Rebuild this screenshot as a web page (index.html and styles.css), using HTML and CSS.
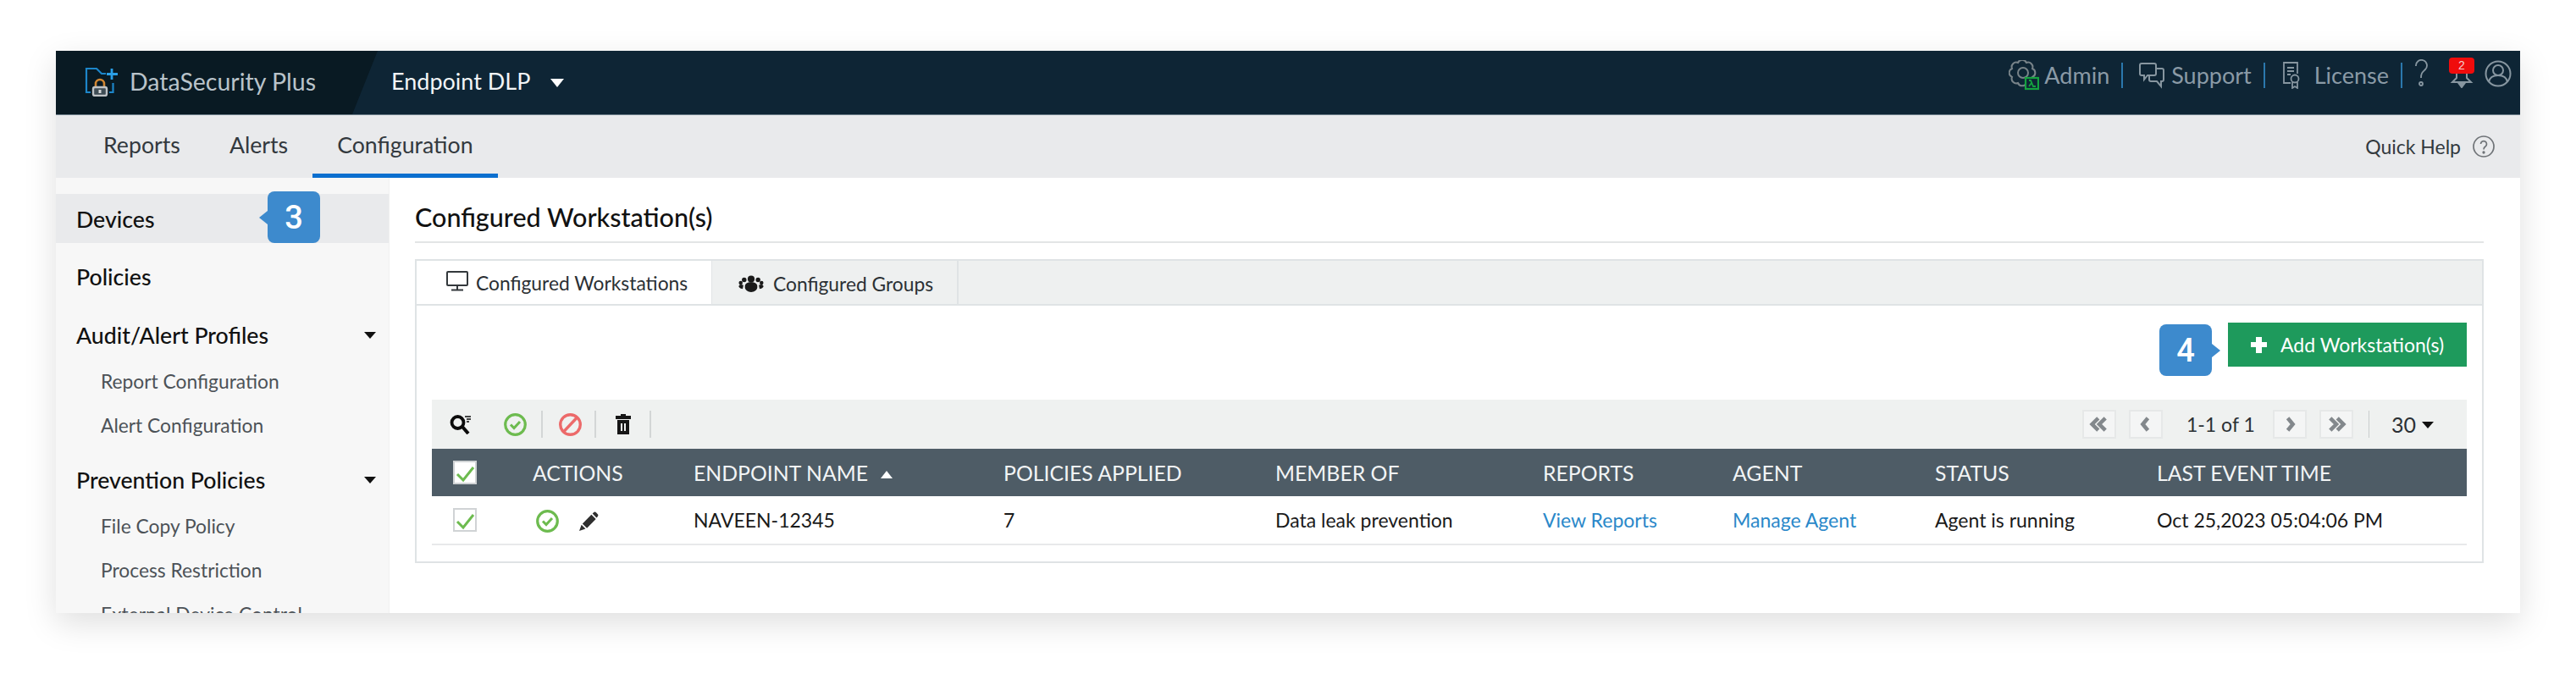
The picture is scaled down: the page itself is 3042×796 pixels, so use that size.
FILE: index.html
```html
<!DOCTYPE html>
<html lang="en">
<head>
<meta charset="utf-8">
<title>DataSecurity Plus - Endpoint DLP</title>
<link rel="stylesheet" href="styles.css">
</head>
<body>
<div class="window">
  <header class="topbar">
    <div class="brand">
      <svg class="brand-icon" viewBox="0 0 40 36" fill="none">
        <path d="M8 31H3V3h12l6 6h5" stroke="#1d86c9" stroke-width="2.200"/>
        <path d="M33 3v13M27 9.500h13" stroke="#2a9fe6" stroke-width="2.800"/>
        <path d="M34.500 20v11H30" stroke="#1d86c9" stroke-width="2.200"/>
        <path d="M14 25v-4a5 5 0 0 1 10 0v4" stroke="#d08632" stroke-width="2.600"/>
        <rect x="11" y="25" width="16" height="10" rx="2" fill="#3f4d55" stroke="#bfc3c6" stroke-width="2.400"/>
        <rect x="17.500" y="28" width="3" height="4" fill="#d5d8da"/>
      </svg>
      <span class="brand-name">DataSecurity Plus</span>
    </div>
    <div class="product">Endpoint DLP<span class="caret-white"></span></div>
    <nav class="top-links">
      <svg class="ic-admin" viewBox="0 0 36 36" fill="none">
        <path d="M21 3A5.400 5.400 0 0 1 28 10A5.400 5.400 0 0 1 28 20A5.400 5.400 0 0 1 21 27A5.400 5.400 0 0 1 11 27A5.400 5.400 0 0 1 4 20A5.400 5.400 0 0 1 4 10A5.400 5.400 0 0 1 11 3A5.400 5.400 0 0 1 21 3Z" stroke="#788389" stroke-width="2"/>
        <circle cx="17" cy="15" r="6" stroke="#788389" stroke-width="2"/>
        <rect x="20" y="21" width="15" height="13" fill="#0e2535" stroke="#14a23f" stroke-width="2.200"/>
        <path d="M24 24h2l3 7h3M27 27l-3 4" stroke="#14a23f" stroke-width="1.800"/>
      </svg>
      <span class="top-text">Admin</span><i class="top-sep"></i>
      <svg class="ic-support" viewBox="0 0 30 32" fill="none" stroke="#8796a0" stroke-width="2">
        <path d="M3 2h15a2 2 0 0 1 2 2v10a2 2 0 0 1-2 2H10l-4 5v-5H3a2 2 0 0 1-2-2V4a2 2 0 0 1 2-2z"/>
        <path d="M20 8h7a2 2 0 0 1 2 2v11a2 2 0 0 1-2 2h-1v6l-5-6h-7a2 2 0 0 1-2-2v-5"/>
      </svg>
      <span class="top-text">Support</span><i class="top-sep"></i>
      <svg class="ic-license" viewBox="0 0 20 32" fill="none" stroke="#8796a0" stroke-width="1.800">
        <path d="M9 25H1V1h16v13"/>
        <path d="M5 7h8M5 11h8M5 15h4"/>
        <circle cx="14" cy="20" r="4.500"/>
        <path d="M11 24v7l3-2 3 2v-7"/>
      </svg>
      <span class="top-text">License</span><i class="top-sep"></i>
      <svg class="ic-question" viewBox="0 0 15 32" fill="none" stroke="#8796a0" stroke-width="1.800">
        <path d="M1 8a6.500 6.500 0 1 1 11 4c-3 3-5 4-5 10"/>
        <circle cx="7" cy="29" r="2"/>
      </svg>
      <span class="bell">
        <svg class="ic-bell" viewBox="0 0 28 30" fill="none" stroke="#8796a0" stroke-width="2">
          <path d="M8 6v12l-5 5h22l-5-5V6"/>
          <path d="M11 25h6l-3 4z" fill="#8796a0"/>
        </svg>
        <span class="badge">2</span>
      </span>
      <svg class="ic-user" viewBox="0 0 32 32" fill="none" stroke="#8796a0" stroke-width="2">
        <circle cx="16" cy="16" r="14.500"/>
        <circle cx="16" cy="12" r="6"/>
        <path d="M5 26c1-6 5-8 11-8s10 2 11 8"/>
      </svg>
    </nav>
  </header>

  <div class="subnav">
    <a class="subnav-item">Reports</a>
    <a class="subnav-item">Alerts</a>
    <a class="subnav-item is-active">Configuration</a>
    <div class="quick-help">Quick Help
      <svg class="ic-help" viewBox="0 0 26 26" fill="none" stroke="#6f7377" stroke-width="1.700">
        <circle cx="13" cy="13" r="12"/>
        <path d="M9.500 10a3.500 3.500 0 1 1 5.500 3c-1.500 1-2 1.500-2 3.500"/>
        <circle cx="13" cy="20" r=".8"/>
      </svg>
    </div>
  </div>

  <div class="body">
    <aside class="sidebar">
      <div class="side-item is-current">Devices
        <span class="callout callout-left">3</span>
      </div>
      <div class="side-item gap-a">Policies</div>
      <div class="side-item gap-b">Audit/Alert Profiles<span class="caret-dark"></span></div>
      <div class="side-sub">Report Configuration</div>
      <div class="side-sub">Alert Configuration</div>
      <div class="side-item gap-c">Prevention Policies<span class="caret-dark"></span></div>
      <div class="side-sub">File Copy Policy</div>
      <div class="side-sub">Process Restriction</div>
      <div class="side-sub">External Device Control</div>
    </aside>

    <main class="main">
      <h1 class="title">Configured Workstation(s)</h1>
      <section class="panel">
        <div class="tabs">
          <div class="tab tab-on">
            <svg class="ic-monitor" viewBox="0 0 26 24" fill="none" stroke="#33383c" stroke-width="2">
              <rect x="1" y="1" width="24" height="16" rx="1"/>
              <path d="M13 17v5M6 22.500h14"/>
            </svg>
            Configured Workstations
          </div>
          <div class="tab tab-off">
            <svg class="ic-group" viewBox="0 0 34 22" fill="#1a1a1a">
              <circle cx="17" cy="5" r="4.500"/><circle cx="8" cy="6" r="3"/><circle cx="26" cy="6" r="3"/>
              <circle cx="3.500" cy="10" r="2.500"/><circle cx="30.500" cy="10" r="2.500"/>
              <path d="M9 14c0-3 3-5 8-5s8 2 8 5v2c0 3-4 6-8 6s-8-3-8-6z"/>
              <path d="M1 15c0-2 1-3 3-3l3 1-1 5-3-1zM33 15c0-2-1-3-3-3l-3 1 1 5 3-1z"/>
            </svg>
            Configured Groups
          </div>
        </div>
        <div class="panel-body">
          <div class="action-row">
            <span class="callout callout-right">4</span>
            <button class="add-btn"><span class="plus"></span>Add Workstation(s)</button>
          </div>
          <div class="toolbar">
            <svg class="ic-search" viewBox="0 0 26 24" fill="none" stroke="#0b0b0b">
              <circle cx="9.500" cy="10" r="7" stroke-width="3.800"/>
              <path d="M15 15l7 8" stroke-width="4"/>
              <path d="M18 3h7M20 6h5M20 9h3" stroke-width="1.500"/>
            </svg>
            <svg class="ic-ok tool-a" viewBox="0 0 27 27" fill="none" stroke="#6dbb4f">
              <circle cx="13.500" cy="13.500" r="11.800" stroke-width="3.200"/>
              <path d="M8 13.500l4 4 7-7.500" stroke-width="3"/>
            </svg>
            <i class="tool-sep sep-a"></i>
            <svg class="ic-ok tool-b" viewBox="0 0 27 27" fill="none" stroke="#ec6a6a" stroke-width="3.400">
              <circle cx="13.500" cy="13.500" r="11.800"/>
              <path d="M6 21.500L21 5.500"/>
            </svg>
            <i class="tool-sep sep-b"></i>
            <svg class="ic-trash tool-c" viewBox="0 0 20 24" fill="#161616">
              <path d="M7 0h6v2h6v4H1V2h6z"/>
              <path fill-rule="evenodd" d="M3 7h14v17H3zM7 11v9h2v-9zM11 11v9h2v-9z"/>
            </svg>
            <i class="tool-sep sep-c"></i>
            <div class="pager">
              <button class="page-btn"><svg viewBox="0 0 20 16" fill="none" stroke="#83888c" stroke-width="3.800"><path d="M9 2L3 8l6 6M16 2l-6 6 6 6"/></svg></button>
              <button class="page-btn"><svg viewBox="0 0 20 16" fill="none" stroke="#83888c" stroke-width="3.800"><path d="M12 2L7 8l5 6"/></svg></button>
              <span class="page-text">1-1 of 1</span>
              <button class="page-btn"><svg viewBox="0 0 20 16" fill="none" stroke="#83888c" stroke-width="3.800"><path d="M8 2l5 6-5 6"/></svg></button>
              <button class="page-btn"><svg viewBox="0 0 20 16" fill="none" stroke="#83888c" stroke-width="3.800"><path d="M4 2l6 6-6 6M11 2l6 6-6 6"/></svg></button>
              <i class="page-sep"></i>
              <span class="page-size">30<span class="caret-dark caret-inline"></span></span>
            </div>
          </div>
          <table class="grid">
            <colgroup>
              <col class="c1"><col class="c2"><col class="c3"><col class="c4"><col class="c5"><col class="c6"><col class="c7"><col class="c8"><col class="c9">
            </colgroup>
            <thead>
              <tr>
                <th><span class="check"><svg viewBox="0 0 24 24" fill="none" stroke="#6dbb4f" stroke-width="3"><path d="M3 14l7 7L22 6"/></svg></span></th>
                <th>ACTIONS</th>
                <th>ENDPOINT NAME<span class="caret-up"></span></th>
                <th>POLICIES APPLIED</th>
                <th>MEMBER OF</th>
                <th>REPORTS</th>
                <th>AGENT</th>
                <th>STATUS</th>
                <th>LAST EVENT TIME</th>
              </tr>
            </thead>
            <tbody>
              <tr>
                <td><span class="check"><svg viewBox="0 0 24 24" fill="none" stroke="#6dbb4f" stroke-width="3"><path d="M3 14l7 7L22 6"/></svg></span></td>
                <td class="row-actions">
                  <svg class="ic-row-ok" viewBox="0 0 27 27" fill="none" stroke="#6dbb4f">
                    <circle cx="13.500" cy="13.500" r="11.800" stroke-width="3.200"/>
                    <path d="M8 13.500l4 4 7-7.500" stroke-width="3"/>
                  </svg>
                  <svg class="ic-pencil" viewBox="0 0 24 24" fill="#2f2f2f">
                    <path d="M4 15L15 4l5.500 5.500L9.500 20.500z"/>
                    <path d="M2.800 16.500l5 5L0 24z"/>
                    <path d="M16.300 2.700l1.200-1.200a2.500 2.500 0 0 1 3.500 0l1.500 1.500a2.500 2.500 0 0 1 0 3.500l-1.200 1.200z"/>
                  </svg>
                </td>
                <td>NAVEEN-12345</td>
                <td>7</td>
                <td>Data leak prevention</td>
                <td><a class="link">View Reports</a></td>
                <td><a class="link">Manage Agent</a></td>
                <td>Agent is running</td>
                <td>Oct 25,2023 05:04:06 PM</td>
              </tr>
            </tbody>
          </table>
        </div>
      </section>
    </main>
  </div>
</div>
</body>
</html>
```
FILE: styles.css
```css
* { box-sizing: border-box; }
html, body { margin: 0; height: 100%; background: #fff; }
body {
  padding: 60px 66px 0;
  font-family: Lato, "Open Sans", sans-serif;
  color: #1a1a1a;
  overflow: hidden;
}
svg { display: block; flex: none; }

.window {
  width: 2910px;
  height: 664px;
  display: flex;
  flex-direction: column;
  background: #fff;
  overflow: hidden;
  box-shadow: 0 12px 36px rgba(0, 0, 0, .13);
}

/* top bar */
.topbar {
  height: 76px;
  flex: none;
  display: flex;
  align-items: center;
  background: #0e2535;
  border-bottom: 1px solid #6d7f8a;
}
.brand {
  width: 380px;
  height: 100%;
  flex: none;
  display: flex;
  align-items: center;
  padding: 0 0 4px 33px;
  background: #091a23;
  clip-path: polygon(0 0, 100% 0, 350px 100%, 0 100%);
}
.brand-icon { width: 40px; height: 36px; }
.brand-name { margin-left: 14px; font-size: 28.500px; color: #b9c3ca; }
.product {
  margin-left: 16px;
  padding-bottom: 4px;
  font-size: 27px;
  color: #f2f5f7;
  display: flex;
  align-items: center;
}
.caret-white {
  margin: 4px 0 0 24px;
  border-left: 8px solid transparent;
  border-right: 8px solid transparent;
  border-top: 10px solid #fff;
}
.top-links {
  margin-left: auto;
  padding: 0 10px 18px 0;
  display: flex;
  align-items: center;
  color: #8796a0;
}
.top-text { font-size: 27px; color: #8a9aa6; }
.top-sep { width: 2px; height: 30px; margin: 0 16px 0 14px; background: #2b78ad; }
.ic-admin { width: 36px; height: 36px; margin-right: 6px; }
.ic-support { width: 30px; height: 32px; margin: 0 8px 0 3px; }
.ic-license { width: 20px; height: 32px; margin: 0 17px 0 5px; }
.ic-question { width: 15px; height: 32px; margin: -6px 25px 0 -1px; }
.bell { position: relative; display: block; width: 30px; height: 30px; margin-right: 12px; }
.ic-bell { width: 28px; height: 30px; margin: 0 1px; }
.badge {
  position: absolute;
  left: 0;
  top: -6px;
  width: 30px;
  height: 19px;
  border-radius: 4px;
  background: #f00c0c;
  color: #f4cfcf;
  font: 14px/19px "Liberation Sans", sans-serif;
  text-align: center;
}
.ic-user { width: 32px; height: 32px; margin-top: -4px; }

/* sub navigation */
.subnav {
  height: 74px;
  flex: none;
  display: flex;
  background: #e9eaec;
  padding-left: 27px;
}
.subnav-item {
  display: flex;
  align-items: center;
  padding: 0 29px;
  height: 74px;
  font-size: 26.700px;
  color: #33393e;
  border-bottom: 5px solid transparent;
}
.is-active { border-bottom-color: #0b6fcf; }
.quick-help {
  margin-left: auto;
  padding-right: 30px;
  display: flex;
  align-items: center;
  gap: 14px;
  font-size: 23px;
  color: #33393e;
}
.ic-help { width: 26px; height: 26px; }

/* body */
.body { flex: 1; min-height: 0; display: flex; }
.sidebar {
  width: 394px;
  flex: none;
  padding-top: 19px;
  background: #f7f7f7;
  border-right: 1px solid #f0f0f0;
}
.side-item {
  position: relative;
  height: 58px;
  padding: 2px 15px 0 24px;
  display: flex;
  align-items: center;
  justify-content: space-between;
  font-size: 26.700px;
  font-weight: 500;
  color: #111;
}
.is-current { background: #e9eaec; }
.gap-a { margin-top: 10px; }
.gap-b { margin-top: 11px; }
.gap-c { margin-top: 9px; }
.side-sub {
  height: 52px;
  padding-left: 53px;
  display: flex;
  align-items: center;
  font-size: 22.800px;
  color: #4c5257;
}
.caret-dark {
  border-left: 7px solid transparent;
  border-right: 7px solid transparent;
  border-top: 8px solid #111;
}
.callout {
  position: absolute;
  width: 62px;
  height: 61px;
  display: flex;
  align-items: center;
  justify-content: center;
  border-radius: 8px;
  background: #3d8acd;
  color: #fff;
  font: 500 38px Roboto, sans-serif;
}
.callout::after {
  content: "";
  position: absolute;
  top: 23px;
  border-top: 8px solid transparent;
  border-bottom: 8px solid transparent;
}
.callout-left { left: 250px; top: -3px; }
.callout-left::after { left: -10px; border-right: 10px solid #3d8acd; }
.callout-right { right: 301px; top: 2px; }
.callout-right::after { right: -10px; border-left: 10px solid #3d8acd; }

/* main */
.main { flex: 1; min-width: 0; padding: 0 43px 0 30px; }
.title {
  height: 77px;
  margin: 0 0 19px;
  padding-top: 26px;
  border-bottom: 2px solid #e3e5e6;
  font-size: 30.500px;
  line-height: 40px;
  font-weight: 500;
  color: #111;
}
.panel { height: 359px; border: 2px solid #dfe3e5; }
.tabs {
  height: 53px;
  display: flex;
  background: #eef0f0;
  border-bottom: 2px solid #dfe3e5;
}
.tab {
  height: 53px;
  display: flex;
  align-items: center;
  font-size: 22.800px;
  color: #2b3034;
}
.tab-on {
  width: 349px;
  padding-left: 35px;
  gap: 9px;
  background: #fff;
  border-right: 1px solid #e2e5e6;
  border-bottom: 2px solid #dfe3e5;
}
.tab-off {
  width: 291px;
  padding-left: 30px;
  gap: 10px;
  border-right: 2px solid #dfe3e5;
}
.ic-monitor { width: 26px; height: 24px; margin-top: -4px; }
.ic-group { width: 32px; height: 20px; }

.panel-body { padding: 20px 18px 0; }
.action-row { position: relative; height: 52px; margin-bottom: 39px; display: flex; justify-content: flex-end; }
.add-btn {
  width: 282px;
  height: 52px;
  padding: 0 0 0 27px;
  display: flex;
  align-items: center;
  gap: 16px;
  border: 0;
  background: #1e9a5c;
  color: #fff;
  font: 23px Lato, sans-serif;
}
.plus {
  position: relative;
  width: 19px;
  height: 19px;
  background:
    linear-gradient(#fff, #fff) center / 19px 6px no-repeat,
    linear-gradient(#fff, #fff) center / 7px 19px no-repeat;
}

.toolbar {
  height: 58px;
  padding: 0 39px 0 21px;
  display: flex;
  align-items: center;
  background: #eff1f0;
}
.ic-search { width: 26px; height: 24px; }
.ic-ok { width: 27px; height: 27px; }
.ic-trash { width: 20px; height: 24px; }
.tool-a { margin-left: 38px; }
.tool-sep { width: 2px; height: 32px; background: #d3d6d6; }
.sep-a { margin-left: 17px; }
.tool-b { margin-left: 19px; }
.sep-b { margin-left: 15px; }
.tool-c { margin-left: 22px; }
.sep-c { margin-left: 21px; }
.pager { margin-left: auto; display: flex; align-items: center; }
.page-btn {
  width: 40px;
  height: 34px;
  padding: 0;
  margin-right: 15px;
  display: flex;
  align-items: center;
  justify-content: center;
  border: 2px solid #e6e8e8;
  background: #f4f5f5;
}
.page-btn svg { width: 24px; height: 20px; }
.page-text { width: 102px; margin-left: 13px; font-size: 23px; color: #2b3034; }
.page-sep { width: 1px; height: 32px; margin: 0 26px 0 3px; background: #c9cdcd; }
.page-size { display: flex; align-items: center; gap: 7px; font-size: 25px; color: #2b3034; }
.caret-inline { margin-top: 2px; }

.grid { width: 2403px; table-layout: fixed; border-collapse: collapse; }
.c1 { width: 119px; }
.c2 { width: 190px; }
.c3 { width: 366px; }
.c4 { width: 321px; }
.c5 { width: 316px; }
.c6 { width: 224px; }
.c7 { width: 239px; }
.c8 { width: 262px; }
.c9 { width: 366px; }
.grid th {
  height: 56px;
  padding: 0;
  background: #4e5c66;
  color: #f2f4f5;
  font-size: 24.800px;
  font-weight: 400;
  text-align: left;
}
.grid th:first-child, .grid td:first-child { padding-left: 25px; }
.grid td {
  height: 57px;
  padding: 0;
  border-bottom: 2px solid #e8e9ea;
  font-size: 23px;
  color: #1a1a1a;
}
.check {
  display: block;
  width: 28px;
  height: 28px;
  background: #fff;
  border: 2px solid #d0d3d5;
}
.check svg { width: 24px; height: 24px; }
.caret-up {
  display: inline-block;
  margin: 0 0 3px 15px;
  border-left: 7px solid transparent;
  border-right: 7px solid transparent;
  border-bottom: 9px solid #fff;
}
.row-actions { padding-left: 4px !important; white-space: nowrap; }
.ic-row-ok, .ic-pencil { display: inline-block; vertical-align: middle; }
.ic-row-ok { width: 27px; height: 27px; margin-right: 18px; }
.ic-pencil { width: 23px; height: 23px; }
.link { color: #2a88c9; }
```
